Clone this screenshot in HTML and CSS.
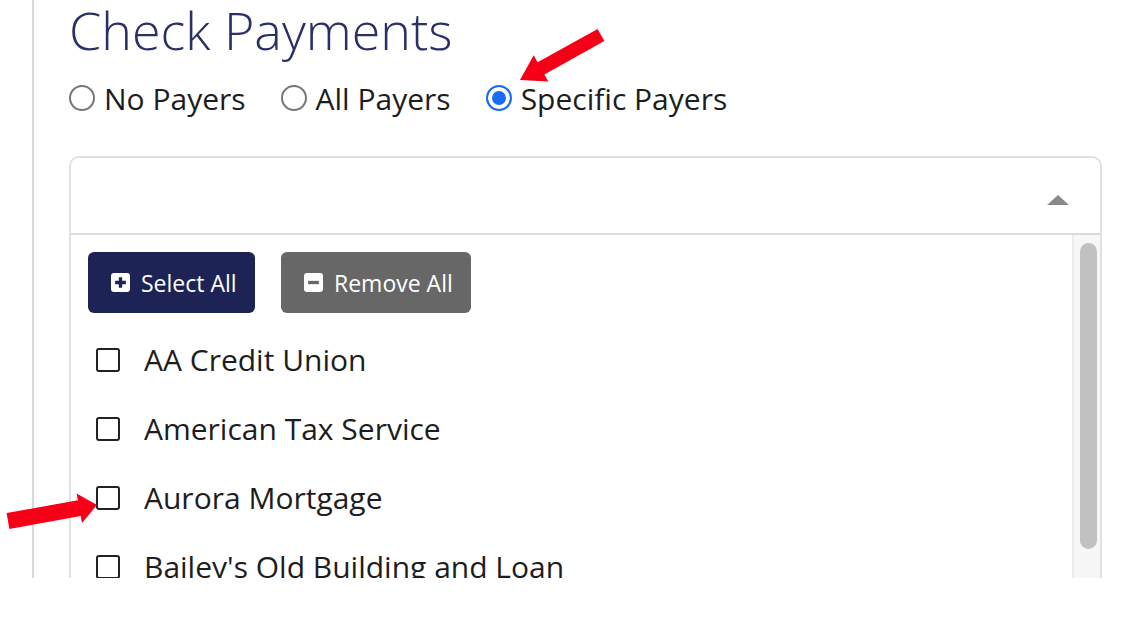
FILE: index.html
```html
<!DOCTYPE html>
<html>
<head>
<meta charset="utf-8">
<link rel="stylesheet" href="styles.css">
</head>
<body>
<div class="frame">
  <div class="panel">
    <h1 class="title">Check Payments</h1>
    <div class="radios">
      <label class="radio"><span class="dot"></span>No Payers</label>
      <label class="radio"><span class="dot"></span>All Payers</label>
      <label class="radio"><span class="dot on"></span>Specific Payers</label>
    </div>
    <div class="picker">
      <div class="picker-head"><span class="caret"></span></div>
      <div class="picker-body">
        <div class="list">
          <div class="actions">
            <button class="btn btn-select">
              <svg class="ico" viewBox="0 0 16 16" width="19" height="19"><rect x="0" y="0" width="16" height="16" rx="2.5" fill="#fff"/><path d="M8 3.5v9M3.5 8h9" stroke="#1e2356" stroke-width="2.8"/></svg>
              <span>Select All</span></button>
            <button class="btn btn-remove">
              <svg class="ico" viewBox="0 0 16 16" width="19" height="19"><rect x="0" y="0" width="16" height="16" rx="2.5" fill="#fff"/><path d="M3.5 8h9" stroke="#676767" stroke-width="2.8"/></svg>
              <span>Remove All</span></button>
          </div>
          <div class="item"><span class="box"></span>AA Credit Union</div>
          <div class="item"><span class="box"></span>American Tax Service</div>
          <div class="item"><span class="box"></span>Aurora Mortgage</div>
          <div class="item"><span class="box"></span>Bailey's Old Building and Loan</div>
        </div>
        <div class="scroll"><div class="thumb"></div></div>
      </div>
    </div>
  </div>
</div>
<svg class="arrows" width="1146" height="635" viewBox="0 0 1146 635">
  <polygon fill="#f50016" points="597.6,28.9 537.6,62.3 533.7,55.3 520,80 548.3,81.5 544.4,74.5 604.4,41.1"/>
  <polygon fill="#f50016" points="6.6,513.1 77.9,500.3 76.6,493.4 97,505 82,523 80.7,516.1 9.4,528.9"/>
</svg>
</body>
</html>
```
FILE: styles.css
```css
html, body {
  margin: 0;
  padding: 0;
  background: #fff;
}
body {
  width: 1146px;
  height: 635px;
  position: relative;
  overflow: hidden;
  font-family: "Open Sans", "Noto Sans", sans-serif;
}
.frame {
  margin-left: 32px;
  height: 578px;
  border-left: 2px solid #d6dadd;
  overflow: hidden;
}
.panel {
  padding-left: 35px;
}
.title {
  margin: 0;
  font-weight: 300;
  font-size: 52px;
  line-height: 60px;
  color: #2a2f68;
}
.radios {
  display: flex;
  align-items: center;
  gap: 35px;
  margin-top: 20px;
  height: 36px;
}
.radio {
  display: flex;
  align-items: center;
  gap: 9px;
  font-size: 30px;
  color: #1d1d1d;
}
.dot {
  width: 22px;
  height: 22px;
  border: 2px solid #767676;
  border-radius: 50%;
  box-sizing: content-box;
}
.dot.on {
  border-color: #1a6cf5;
  background: #1a6cf5;
  box-shadow: inset 0 0 0 4px #fff;
}
.picker {
  margin-top: 40px;
  width: 1033px;
  border: 2px solid #dfe2e4;
  border-bottom: none;
  border-radius: 10px 10px 0 0;
  box-sizing: border-box;
}
.picker-head {
  height: 75px;
  border-bottom: 2px solid #d7dbdd;
  display: flex;
  align-items: center;
  justify-content: flex-end;
  padding-right: 31px;
}
.caret {
  width: 0;
  height: 0;
  border-left: 11px solid transparent;
  border-right: 11px solid transparent;
  border-bottom: 10px solid #8a8a8a;
  margin-top: 8px;
}
.picker-body {
  display: flex;
  height: 400px;
}
.list {
  flex: 1;
  padding: 17px 0 0 17px;
}
.actions {
  display: flex;
  gap: 26px;
}
.btn {
  height: 61px;
  border: none;
  border-radius: 6px;
  color: #fff;
  font-family: "Open Sans", "Noto Sans", sans-serif;
  font-size: 23px;
  display: flex;
  align-items: center;
  justify-content: flex-start;
  gap: 11px;
  padding: 0 0 0 23px;
  white-space: nowrap;
  box-sizing: border-box;
}
.ico {
  flex: none;
}
.btn-select {
  background: #1e2356;
  width: 167px;
}
.btn-remove {
  background: #676767;
  width: 190px;
}
.item {
  display: flex;
  align-items: center;
  height: 69px;
  font-size: 30px;
  color: #1d1d1d;
  gap: 24px;
  padding-left: 8px;
}
.actions + .item {
  margin-top: 12px;
}
.box {
  width: 20px;
  height: 20px;
  border: 2px solid #222;
  border-radius: 3px;
}
.scroll {
  width: 28px;
  background: #f7f7f7;
  border-left: 2px solid #ececec;
  padding: 8px 0 0 6px;
  box-sizing: border-box;
}
.thumb {
  width: 17px;
  height: 306px;
  background: #c1c1c1;
  border-radius: 9px;
}
.arrows {
  position: absolute;
  left: 0;
  top: 0;
  pointer-events: none;
}
```
